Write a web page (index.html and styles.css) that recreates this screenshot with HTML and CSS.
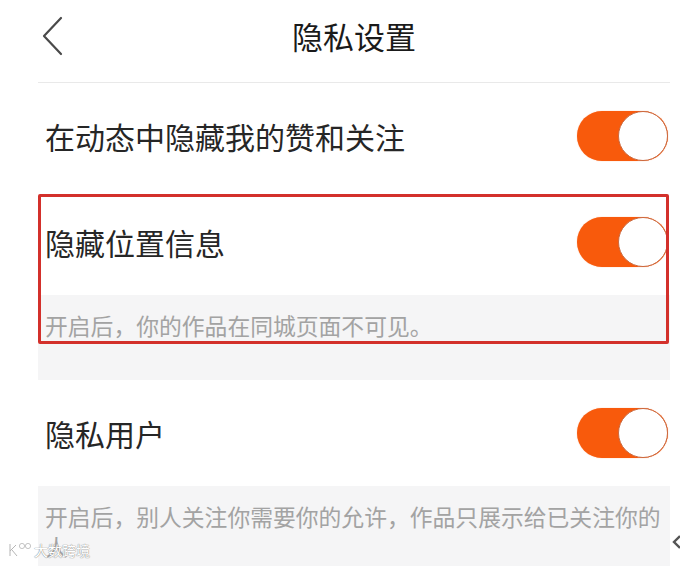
FILE: index.html
```html
<!DOCTYPE html>
<html lang="zh-CN">
<head>
<meta charset="utf-8">
<title>隐私设置</title>
<link rel="stylesheet" href="styles.css">
</head>
<body>
<div class="page">
  <header class="header">
    <svg class="back" width="24" height="40" viewBox="0 0 24 40"><path d="M20 2 L3 20 L20 38" fill="none" stroke="#4a4a4a" stroke-width="2.2" stroke-linecap="round" stroke-linejoin="round"/></svg>
    <h1 class="title">隐私设置</h1>
  </header>

  <div class="row">
    <span class="label">在动态中隐藏我的赞和关注</span>
    <span class="toggle"><span class="knob"></span></span>
  </div>

  <div class="row">
    <span class="label">隐藏位置信息</span>
    <span class="toggle"><span class="knob"></span></span>
  </div>
  <p class="desc">开启后，你的作品在同城页面不可见。</p>

  <div class="row">
    <span class="label">隐私用户</span>
    <span class="toggle"><span class="knob"></span></span>
  </div>
  <p class="desc">开启后，别人关注你需要你的允许，作品只展示给已关注你的人</p>

  <div class="highlight"></div>
</div>

<div class="watermark">
  <svg width="24" height="16" viewBox="0 0 24 16"><path d="M2 2 V14 M2 9 L8 3 M4 8 L9 14" fill="none" stroke="#fff" stroke-width="2.6"/><path d="M2 2 V14 M2 9 L8 3 M4 8 L9 14" fill="none" stroke="#b5b5b5" stroke-width="1"/><circle cx="14" cy="4" r="2.6" fill="#fff" stroke="#b5b5b5" stroke-width="0.8"/><circle cx="20" cy="4" r="2.6" fill="#fff" stroke="#b5b5b5" stroke-width="0.8"/></svg>
  <span class="wm-text">大数跨境</span>
</div>
<svg class="edge-mark" width="10" height="16" viewBox="0 0 10 16"><path d="M9 2 L3 8 L9 14" fill="none" stroke="#555" stroke-width="2.4"/></svg>
</body>
</html>
```

FILE: styles.css
```css
* { box-sizing: border-box; }

html, body {
  margin: 0;
  padding: 0;
  background: #ffffff;
  overflow: hidden;
}

body {
  font-family: "Noto Sans CJK SC", "Noto Sans", sans-serif;
  width: 680px;
  height: 566px;
  position: relative;
}

.page {
  position: relative;
  margin-left: 38px;
  width: 632px;
}

.header {
  height: 83px;
  border-bottom: 1px solid #e9e9e9;
  display: flex;
  align-items: center;
  padding: 0 0 10px 3px;
  position: relative;
}

.back {
  display: block;
}

.title {
  position: absolute;
  left: 0;
  right: 0;
  top: 14px;
  margin: 0;
  text-align: center;
  font-size: 31px;
  line-height: 44px;
  font-weight: 400;
  color: #1a1a1a;
  pointer-events: none;
}

.row {
  height: 106px;
  display: flex;
  align-items: center;
  justify-content: space-between;
  padding: 0 2px 0 7px;
  background: #fff;
}

.label {
  font-size: 30px;
  line-height: 40px;
  color: #262626;
}

.toggle {
  width: 91px;
  height: 50px;
  border-radius: 25px;
  background: #f85a0c;
  display: flex;
  align-items: center;
  justify-content: flex-end;
  box-shadow: 0 0 1px rgba(248, 90, 12, 0.6);
}

.knob {
  width: 50px;
  height: 50px;
  border-radius: 50%;
  background: #fff;
  border: 1.5px solid #c9683f;
}

.desc {
  margin: 0;
  background: #f5f5f6;
  padding: 16px 2px 39px 7px;
  font-size: 22.8px;
  line-height: 30px;
  color: #a3a3a3;
}

.highlight {
  position: absolute;
  left: 0;
  top: 194px;
  width: 631px;
  height: 150px;
  border: 3px solid #d3302b;
  border-radius: 2px;
  pointer-events: none;
}

.watermark {
  position: absolute;
  left: 8px;
  top: 542px;
  display: flex;
  align-items: center;
  gap: 2px;
}

.wm-text {
  font-size: 14px;
  line-height: 16px;
  color: #ffffff;
  text-shadow: 0 0 1px #8a8a8a, 0 0 1px #8a8a8a;
}

.edge-mark {
  position: absolute;
  left: 671px;
  top: 534px;
}
```
